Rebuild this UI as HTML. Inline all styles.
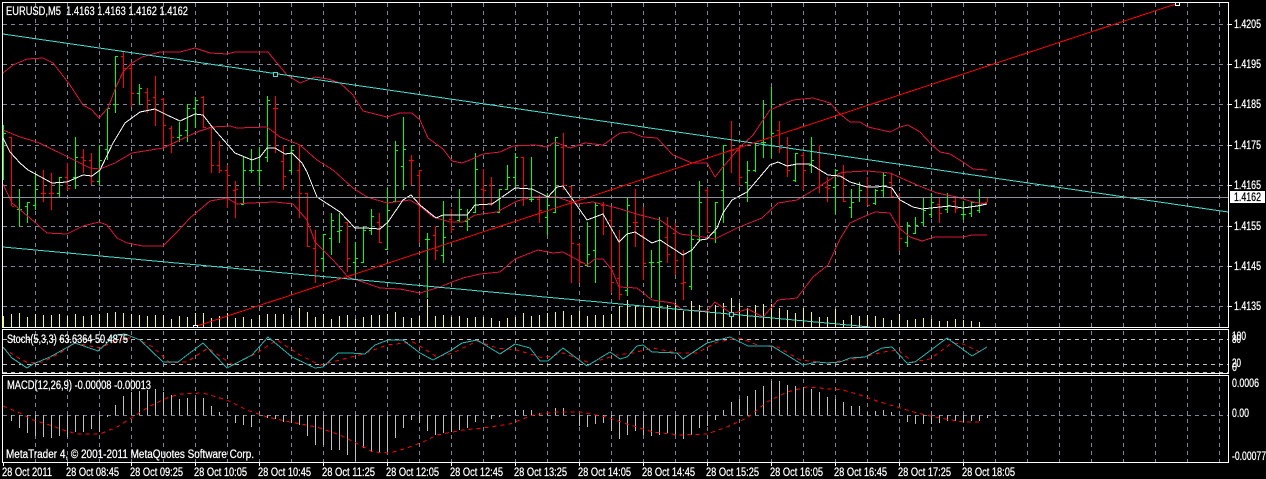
<!DOCTYPE html>
<html><head><meta charset="utf-8"><title>EURUSD,M5</title>
<style>
html,body{margin:0;padding:0;background:#000;width:1266px;height:479px;overflow:hidden}
svg{display:block}
text{font-family:"Liberation Sans",sans-serif;font-size:11.5px;fill:#fff;stroke:#fff;stroke-width:.25px}
text.k{fill:#000;stroke:#000}
.c{shape-rendering:crispEdges;fill:none}
</style></head><body>
<svg width="1266" height="479" viewBox="0 0 1266 479" xmlns="http://www.w3.org/2000/svg">
<rect width="1266" height="479" fill="#000"/>
<g class="c">
<!-- grid -->
<path stroke="#778899" stroke-dasharray="4 4" d="M3 24.5H1228M3 64.5H1228M3 104.5H1228M3 145.5H1228M3 185.5H1228M3 226.5H1228M3 266.5H1228M3 306.5H1228M3 415.5H1228"/>
<path stroke="#778899" stroke-dasharray="4 4" d="M35.5 3V462M67.5 3V462M99.5 3V462M131.5 3V462M163.5 3V462M195.5 3V462M227.5 3V462M259.5 3V462M291.5 3V462M323.5 3V462M355.5 3V462M387.5 3V462M419.5 3V462M451.5 3V462M483.5 3V462M515.5 3V462M547.5 3V462M579.5 3V462M611.5 3V462M643.5 3V462M675.5 3V462M707.5 3V462M739.5 3V462M771.5 3V462M803.5 3V462M835.5 3V462M867.5 3V462M899.5 3V462M931.5 3V462M963.5 3V462M995.5 3V462M1027.5 3V462M1059.5 3V462M1091.5 3V462M1123.5 3V462M1155.5 3V462M1187.5 3V462M1219.5 3V462"/>
<path stroke="#c0c0c0" stroke-dasharray="4 4" d="M3 339.5H1228M3 364.5H1228M3 372.5H1228"/>
<!-- volumes -->
<path stroke="#ffff33" d="M3.5 316V327M11.5 314V327M19.5 313V327M27.5 317V327M35.5 314V327M43.5 315V327M51.5 315V327M59.5 314V327M67.5 316V327M75.5 314V327M83.5 316V327M91.5 315V327M99.5 314V327M107.5 313V327M115.5 312V327M123.5 313V327M131.5 314V327M139.5 315V327M147.5 316V327M155.5 315V327M163.5 315V327M171.5 319V327M179.5 316V327M187.5 317V327M195.5 313V327M203.5 313V327M211.5 318V327M219.5 316V327M227.5 313V327M235.5 318V327M243.5 317V327M251.5 319V327M259.5 315V327M267.5 314V327M275.5 314V327M283.5 314V327M291.5 319V327M299.5 308V327M307.5 312V327M315.5 317V327M323.5 314V327M331.5 319V327M339.5 316V327M347.5 315V327M355.5 319V327M363.5 317V327M371.5 315V327M379.5 315V327M387.5 314V327M395.5 312V327M403.5 317V327M411.5 318V327M419.5 316V327M427.5 299V327M435.5 316V327M443.5 315V327M451.5 317V327M459.5 316V327M467.5 318V327M475.5 317V327M483.5 317V327M491.5 318V327M499.5 321V327M507.5 318V327M515.5 317V327M523.5 313V327M531.5 316V327M539.5 315V327M547.5 313V327M555.5 312V327M563.5 311V327M571.5 315V327M579.5 311V327M587.5 316V327M595.5 315V327M603.5 315V327M611.5 314V327M619.5 306V327M627.5 300V327M635.5 305V327M643.5 308V327M651.5 308V327M659.5 287V327M667.5 305V327M675.5 303V327M683.5 311V327M691.5 301V327M699.5 305V327M707.5 309V327M715.5 305V327M723.5 303V327M731.5 298V327M739.5 303V327M747.5 308V327M755.5 305V327M763.5 304V327M771.5 304V327M779.5 308V327M787.5 310V327M795.5 313V327M803.5 308V327M811.5 312V327M819.5 317V327M827.5 317V327M835.5 309V327M843.5 320V327M851.5 315V327M859.5 316V327M867.5 315V327M875.5 316V327M883.5 318V327M891.5 320V327M899.5 314V327M907.5 320V327M915.5 319V327M923.5 318V327M931.5 319V327M939.5 321V327M947.5 321V327M955.5 319V327M963.5 320V327M971.5 321V327M979.5 322V327"/>
<!-- green bars -->
<path stroke="#00ff00" d="M3.5 125V180M4 133.5h2M19.5 189V227M17 209.5h2M20 209.5h2M27.5 202V223M25 206.5h2M28 202.5h2M35.5 173V210M33 205.5h2M36 189.5h2M59.5 177V197M57 193.5h2M60 177.5h2M75.5 137V189M73 177.5h2M76 157.5h2M99.5 145V185M97 181.5h2M100 160.5h2M107.5 108V160M105 149.5h2M108 108.5h2M115.5 56V113M113 104.5h2M116 56.5h2M139.5 84V105M137 93.5h2M140 88.5h2M179.5 122V142M177 137.5h2M180 135.5h2M187.5 104V142M185 130.5h2M188 108.5h2M195.5 97V128M193 108.5h2M196 100.5h2M243.5 157V205M241 204.5h2M244 170.5h2M251.5 149V173M249 170.5h2M252 170.5h2M259.5 147V186M257 170.5h2M260 170.5h2M267.5 96V162M265 157.5h2M268 100.5h2M291.5 145V173M289 170.5h2M292 150.5h2M323.5 234V272M321 258.5h2M324 234.5h2M331.5 213V255M329 238.5h2M332 220.5h2M339.5 213V243M337 231.5h2M340 230.5h2M355.5 242V275M353 262.5h2M356 258.5h2M363.5 226V263M361 262.5h2M364 230.5h2M371.5 209V235M369 230.5h2M372 216.5h2M387.5 188V250M385 249.5h2M388 210.5h2M395.5 141V202M393 201.5h2M396 150.5h2M403.5 117V190M401 166.5h2M404 149.5h2M427.5 233V298M425 239.5h2M428 239.5h2M443.5 201V263M441 255.5h2M444 237.5h2M459.5 189V222M457 220.5h2M460 209.5h2M467.5 209V231M465 221.5h2M468 219.5h2M475.5 153V213M473 212.5h2M476 169.5h2M499.5 189V213M497 212.5h2M500 189.5h2M507.5 165V190M505 189.5h2M508 177.5h2M515.5 153V187M513 177.5h2M516 157.5h2M531.5 157V202M529 199.5h2M532 199.5h2M547.5 193V235M545 217.5h2M548 205.5h2M555.5 137V213M553 212.5h2M556 137.5h2M587.5 222V267M585 265.5h2M588 254.5h2M595.5 202V283M593 250.5h2M596 205.5h2M627.5 197V296M625 290.5h2M628 205.5h2M651.5 250V298M649 262.5h2M652 262.5h2M659.5 217V307M657 262.5h2M660 261.5h2M691.5 230V290M689 286.5h2M692 239.5h2M699.5 181V242M697 239.5h2M700 202.5h2M715.5 202V243M713 232.5h2M716 202.5h2M723.5 145V223M721 190.5h2M724 145.5h2M747.5 161V202M745 182.5h2M748 170.5h2M755.5 143V172M753 170.5h2M756 143.5h2M763.5 100V158M761 142.5h2M764 142.5h2M771.5 87V158M769 145.5h2M772 133.5h2M795.5 153V182M793 180.5h2M796 153.5h2M811.5 137V173M809 165.5h2M812 160.5h2M835.5 169V214M833 187.5h2M836 170.5h2M851.5 189V218M849 207.5h2M852 202.5h2M859.5 182V202M857 197.5h2M860 190.5h2M875.5 189V205M873 203.5h2M876 190.5h2M883.5 173V197M881 190.5h2M884 175.5h2M907.5 222V247M905 242.5h2M908 225.5h2M915.5 217V234M913 233.5h2M916 225.5h2M923.5 197V226M921 222.5h2M924 210.5h2M931.5 193V218M929 214.5h2M932 202.5h2M947.5 193V213M945 209.5h2M948 205.5h2M963.5 201V220M961 214.5h2M964 214.5h2M971.5 202V217M969 213.5h2M972 202.5h2M979.5 189V213M977 210.5h2M980 205.5h2"/>
<!-- red bars -->
<path stroke="#ff0000" d="M11.5 137V206M9 137.5h2M12 206.5h2M43.5 170V202M41 193.5h2M44 193.5h2M51.5 173V210M49 193.5h2M52 193.5h2M67.5 163V190M65 177.5h2M68 188.5h2M83.5 149V173M81 157.5h2M84 160.5h2M91.5 153V185M89 160.5h2M92 181.5h2M123.5 52V88M121 56.5h2M124 68.5h2M131.5 62V107M129 68.5h2M132 93.5h2M147.5 88V113M145 92.5h2M148 100.5h2M155.5 76V126M153 97.5h2M156 110.5h2M163.5 98V147M161 99.5h2M164 125.5h2M171.5 126V153M169 128.5h2M172 137.5h2M203.5 96V128M201 97.5h2M204 127.5h2M211.5 125V173M209 127.5h2M212 165.5h2M219.5 141V173M217 165.5h2M220 170.5h2M227.5 165V208M225 170.5h2M228 175.5h2M235.5 181V218M233 190.5h2M236 189.5h2M275.5 96V153M273 108.5h2M276 108.5h2M283.5 145V190M281 161.5h2M284 176.5h2M299.5 145V218M297 170.5h2M300 193.5h2M307.5 193V247M305 193.5h2M308 246.5h2M315.5 230V283M313 248.5h2M316 270.5h2M347.5 222V272M345 222.5h2M348 258.5h2M379.5 213V243M377 222.5h2M380 242.5h2M411.5 155V185M409 160.5h2M412 160.5h2M419.5 170V243M417 175.5h2M420 170.5h2M435.5 226V260M433 235.5h2M436 250.5h2M451.5 209V233M449 219.5h2M452 229.5h2M483.5 169V210M481 189.5h2M484 190.5h2M491.5 177V206M489 185.5h2M492 203.5h2M523.5 157V206M521 157.5h2M524 197.5h2M539.5 195V223M537 199.5h2M540 210.5h2M563.5 133V190M561 147.5h2M564 185.5h2M571.5 186V283M569 186.5h2M572 243.5h2M579.5 243V283M577 244.5h2M580 262.5h2M603.5 202V235M601 205.5h2M604 226.5h2M611.5 206V293M609 220.5h2M612 282.5h2M619.5 230V300M617 278.5h2M620 294.5h2M635.5 189V247M633 222.5h2M636 222.5h2M643.5 207V280M641 235.5h2M644 263.5h2M667.5 217V263M665 237.5h2M668 254.5h2M675.5 223V275M673 233.5h2M676 260.5h2M683.5 250V300M681 283.5h2M684 282.5h2M707.5 188V233M705 190.5h2M708 232.5h2M731.5 121V173M729 150.5h2M732 150.5h2M739.5 145V186M737 150.5h2M740 177.5h2M779.5 121V153M777 130.5h2M780 148.5h2M787.5 137V177M785 147.5h2M788 170.5h2M803.5 152V190M801 155.5h2M804 170.5h2M819.5 145V193M817 152.5h2M820 185.5h2M827.5 177V202M825 187.5h2M828 188.5h2M843.5 165V202M841 176.5h2M844 201.5h2M867.5 177V205M865 186.5h2M868 205.5h2M891.5 173V197M889 182.5h2M892 196.5h2M899.5 193V251M897 196.5h2M900 238.5h2M939.5 197V223M937 204.5h2M940 213.5h2M955.5 198V213M953 201.5h2M956 208.5h2M987.5 197V202M985 197.5h2M985 202.5h2"/>
<!-- bands -->
<path stroke="#dc143c" d="M3 73L13 65L27 59L43 58L53 63L70 85L83 105L92 110L99 118L108 108L116 87L123 72L132 63L142 57L160 52L180 52L195 48L210 53L227 54L235 52L260 52L268 52L277 63L287 75L300 83L315 77L328 79L340 83L353 95L363 111L387 117L400 113L412 113L420 120L428 138L443 149L452 161L462 163L470 160L483 154L500 152L513 146L535 145L547 147L555 142L570 148L585 143L603 145L620 133L630 132L643 137L657 138L673 155L692 163L707 163L715 177L723 167L740 147L753 135L770 110L793 100L813 98L830 103L840 114L850 122L860 122L868 127L890 132L900 127L908 125L920 132L932 145L940 152L950 154L963 162L973 169L987 170"/>
<path stroke="#dc143c" d="M3 130L20 137L37 142L60 153L80 163L90 168L100 169L115 163L132 153L163 148L180 140L197 132L212 127L230 126L237 128L267 127L280 137L300 145L317 160L333 170L353 188L367 197L387 203L410 200L420 206L433 217L450 222L463 222L475 215L497 212L517 201L533 197L557 197L577 204L593 202L617 208L640 215L660 220L680 234L697 236L715 239L737 228L762 218L778 203L797 200L817 188L840 173L847 172L867 171L890 173L917 185L937 193L957 197L973 202L987 204"/>
<path stroke="#dc143c" d="M3 184L12 203L30 218L47 233L67 234L83 226L99 222L107 225L117 238L127 243L143 246L163 246L177 232L190 218L210 201L227 198L237 204L250 203L275 202L293 204L307 220L315 242L333 260L348 277L363 282L380 288L400 289L420 293L440 287L452 282L463 278L480 274L500 272L515 259L538 250L553 253L563 252L587 265L595 259L603 259L612 270L619 287L637 288L652 300L673 303L683 310L707 311L715 302L732 314L738 312L748 309L763 317L778 300L797 298L813 277L828 265L840 239L850 223L863 217L875 212L890 213L898 227L910 237L922 241L935 237L963 237L972 235L987 235"/>
<!-- white MA -->
<path stroke="#fff" d="M3 138L10 152L20 163L28 170L52 183L67 182L83 175L92 176L100 170L113 143L125 123L140 112L155 109L167 115L180 121L195 114L203 115L213 128L235 153L252 160L260 157L267 148L275 148L285 154L292 153L302 163L307 172L317 197L340 212L355 228L365 228L380 229L388 222L403 200L411 195L420 205L436 218L443 215L467 215L475 205L492 204L515 188L532 189L548 197L557 187L563 186L573 200L587 220L603 214L619 242L627 234L635 232L652 243L660 240L683 255L692 250L700 240L707 239L717 228L723 213L732 200L747 192L770 165L778 162L787 166L797 164L810 164L828 175L840 176L850 182L867 187L877 187L883 186L892 188L900 200L913 207L922 209L940 207L950 206L963 208L977 206L987 204"/>
<!-- trend lines -->
<path stroke="#40e0d0" d="M3 34L1228 212"/>
<path stroke="#40e0d0" d="M3 247L870 327"/>
<path stroke="#ff0000" d="M197 326L1176 4"/>
<rect x="273.5" y="72.5" width="4" height="4" stroke="#40e0d0" fill="#000"/>
<rect x="729.5" y="312.5" width="4" height="4" stroke="#40e0d0" fill="#000"/>
<rect x="1175.5" y="2.5" width="4" height="3" stroke="#fff" fill="#000"/>
<rect x="193.5" y="325.5" width="4" height="2" stroke="#fff" fill="#000"/>
<!-- current price -->
<path stroke="#8a929a" d="M3 197.5H1228"/>
<!-- stoch -->
<path stroke="#ff0000" stroke-dasharray="4 4" d="M3 348L17 357L28 363L43 362L60 353L75 343L100 348L113 342L133 337L153 347L170 363L187 362L208 348L233 365L257 353L277 340L300 355L320 365L340 360L363 354L387 345L413 342L423 348L437 357L453 353L477 341L497 348L517 350L543 358L563 353L590 363L617 355L633 353L653 348L677 353L697 353L717 342L740 338L760 346L778 347L800 360L827 363L860 358L883 352L898 350L913 362L930 359L952 343L963 344L980 352"/>
<path stroke="#20b2aa" d="M3 347L12 358L27 368L33 364L50 357L75 343L98 351L107 343L115 335L125 334L140 340L163 362L178 362L203 343L227 368L252 355L268 337L292 357L315 368L323 367L338 353L350 353L365 354L375 345L388 340L403 340L420 353L433 360L450 351L462 343L477 340L500 354L515 344L530 348L540 361L548 361L563 348L587 366L610 352L620 359L627 357L637 346L643 345L652 352L677 353L683 359L707 343L730 337L748 346L772 346L803 365L817 362L828 363L840 362L850 358L865 357L882 348L892 347L907 363L915 362L947 338L972 356L987 347"/>
<!-- macd -->
<path stroke="#c0c0c0" d="M11.5 415V421M19.5 415V428M27.5 415V433M35.5 415V436M43.5 415V437M51.5 415V438M59.5 415V436M67.5 415V437M75.5 415V432M83.5 415V432M91.5 415V429M99.5 415V432M107.5 415V417M115.5 415V405M123.5 415V396M131.5 415V392M139.5 415V391M147.5 415V390M155.5 415V389M163.5 415V392M171.5 415V395M179.5 415V399M187.5 415V398M195.5 415V398M203.5 415V398M211.5 415V406M219.5 415V412M235.5 415V423M243.5 415V425M251.5 415V427M267.5 415V418M275.5 415V419M283.5 415V422M291.5 415V423M299.5 415V425M307.5 415V436M315.5 415V445M323.5 415V445M331.5 415V450M339.5 415V450M347.5 415V455M355.5 415V461M363.5 415V448M371.5 415V452M379.5 415V452M387.5 415V452M395.5 415V438M403.5 415V428M411.5 415V420M419.5 415V423M427.5 415V431M435.5 415V435M443.5 415V433M451.5 415V432M459.5 415V430M467.5 415V428M475.5 415V422M491.5 415V419M499.5 415V417M515.5 415V410M523.5 415V410M531.5 415V410M539.5 415V413M547.5 415V413M555.5 415V408M563.5 415V408M579.5 415V426M587.5 415V427M595.5 415V424M603.5 415V423M611.5 415V431M619.5 415V439M627.5 415V435M635.5 415V431M643.5 415V435M651.5 415V436M659.5 415V435M667.5 415V433M675.5 415V435M683.5 415V439M691.5 415V435M699.5 415V428M707.5 415V426M715.5 415V420M723.5 415V410M731.5 415V402M739.5 415V399M747.5 415V396M755.5 415V390M763.5 415V386M771.5 415V381M779.5 415V381M787.5 415V385M795.5 415V386M803.5 415V387M811.5 415V389M819.5 415V392M827.5 415V397M835.5 415V399M843.5 415V402M851.5 415V406M859.5 415V406M867.5 415V412M875.5 415V411M883.5 415V410M891.5 415V412M907.5 415V422M915.5 415V424M923.5 415V424M931.5 415V424M939.5 415V423M947.5 415V421M955.5 415V421M963.5 415V422M971.5 415V421M979.5 415V421M987.5 415V418"/>
<path stroke="#ff0000" stroke-dasharray="4 4" d="M3 406L20 413L33 420L50 425L63 430L77 434L100 434L117 427L133 417L150 406L167 398L180 394L203 393L227 400L247 410L267 417L290 422L317 427L340 435L360 445L373 452L390 453L407 448L423 442L437 435L463 430L483 428L510 424L533 415L557 412L580 412L607 417L627 424L653 432L680 435L707 434L727 427L747 418L767 402L787 392L807 387L843 390L860 395L877 401L897 407L917 413L940 418L963 422L983 422"/>
<!-- frames -->
<rect x="2.5" y="2.5" width="1226" height="325" stroke="#fff"/>
<rect x="2.5" y="329.5" width="1226" height="44" stroke="#fff"/>
<rect x="2.5" y="375.5" width="1226" height="87" stroke="#fff"/>
<!-- axis ticks -->
<path stroke="#fff" d="M1229 24.5h3M1229 64.5h3M1229 104.5h3M1229 145.5h3M1229 185.5h3M1229 226.5h3M1229 266.5h3M1229 306.5h3M3.5 463v3M67.5 463v3M131.5 463v3M195.5 463v3M259.5 463v3M323.5 463v3M387.5 463v3M451.5 463v3M515.5 463v3M579.5 463v3M643.5 463v3M707.5 463v3M771.5 463v3M835.5 463v3M899.5 463v3M963.5 463v3"/>
<rect x="1230" y="191" width="35" height="12" fill="#fff"/>
</g>
<text x="6" y="15" textLength="182" lengthAdjust="spacingAndGlyphs" xml:space="preserve">EURUSD,M5  1.4163 1.4163 1.4162 1.4162</text>
<text x="7" y="343" textLength="121" lengthAdjust="spacingAndGlyphs">Stoch(5,3,3) 63.6364 50.4875</text>
<text x="7" y="389" textLength="144" lengthAdjust="spacingAndGlyphs">MACD(12,26,9) -0.00008 -0.00013</text>
<text x="6" y="458" textLength="248" lengthAdjust="spacingAndGlyphs">MetaTrader 4, © 2001-2011 MetaQuotes Software Corp.</text>
<text x="1234" y="28" textLength="27" lengthAdjust="spacingAndGlyphs">1.4205</text>
<text x="1234" y="68" textLength="27" lengthAdjust="spacingAndGlyphs">1.4195</text>
<text x="1234" y="108" textLength="27" lengthAdjust="spacingAndGlyphs">1.4185</text>
<text x="1234" y="149" textLength="27" lengthAdjust="spacingAndGlyphs">1.4175</text>
<text x="1234" y="189" textLength="27" lengthAdjust="spacingAndGlyphs">1.4165</text>
<text class="k" x="1234" y="201" textLength="27" lengthAdjust="spacingAndGlyphs">1.4162</text>
<text x="1234" y="230" textLength="27" lengthAdjust="spacingAndGlyphs">1.4155</text>
<text x="1234" y="270" textLength="27" lengthAdjust="spacingAndGlyphs">1.4145</text>
<text x="1234" y="310" textLength="27" lengthAdjust="spacingAndGlyphs">1.4135</text>
<text x="1232" y="340" textLength="14" lengthAdjust="spacingAndGlyphs">100</text>
<text x="1232" y="343" textLength="9" lengthAdjust="spacingAndGlyphs">80</text>
<text x="1232" y="367" textLength="9" lengthAdjust="spacingAndGlyphs">20</text>
<text x="1232" y="371" textLength="5" lengthAdjust="spacingAndGlyphs">0</text>
<text x="1232" y="387" textLength="27" lengthAdjust="spacingAndGlyphs">0.0006</text>
<text x="1232" y="417" textLength="17" lengthAdjust="spacingAndGlyphs">0.00</text>
<text x="1232" y="460" textLength="34" lengthAdjust="spacingAndGlyphs">-0.00077</text>
<text x="2" y="476" textLength="50" lengthAdjust="spacingAndGlyphs">28 Oct 2011</text>
<text x="66" y="476" textLength="53" lengthAdjust="spacingAndGlyphs">28 Oct 08:45</text>
<text x="130" y="476" textLength="53" lengthAdjust="spacingAndGlyphs">28 Oct 09:25</text>
<text x="194" y="476" textLength="53" lengthAdjust="spacingAndGlyphs">28 Oct 10:05</text>
<text x="258" y="476" textLength="53" lengthAdjust="spacingAndGlyphs">28 Oct 10:45</text>
<text x="322" y="476" textLength="53" lengthAdjust="spacingAndGlyphs">28 Oct 11:25</text>
<text x="386" y="476" textLength="53" lengthAdjust="spacingAndGlyphs">28 Oct 12:05</text>
<text x="450" y="476" textLength="53" lengthAdjust="spacingAndGlyphs">28 Oct 12:45</text>
<text x="514" y="476" textLength="53" lengthAdjust="spacingAndGlyphs">28 Oct 13:25</text>
<text x="578" y="476" textLength="53" lengthAdjust="spacingAndGlyphs">28 Oct 14:05</text>
<text x="642" y="476" textLength="53" lengthAdjust="spacingAndGlyphs">28 Oct 14:45</text>
<text x="706" y="476" textLength="53" lengthAdjust="spacingAndGlyphs">28 Oct 15:25</text>
<text x="770" y="476" textLength="53" lengthAdjust="spacingAndGlyphs">28 Oct 16:05</text>
<text x="834" y="476" textLength="53" lengthAdjust="spacingAndGlyphs">28 Oct 16:45</text>
<text x="898" y="476" textLength="53" lengthAdjust="spacingAndGlyphs">28 Oct 17:25</text>
<text x="962" y="476" textLength="53" lengthAdjust="spacingAndGlyphs">28 Oct 18:05</text>
</svg>
</body></html>
